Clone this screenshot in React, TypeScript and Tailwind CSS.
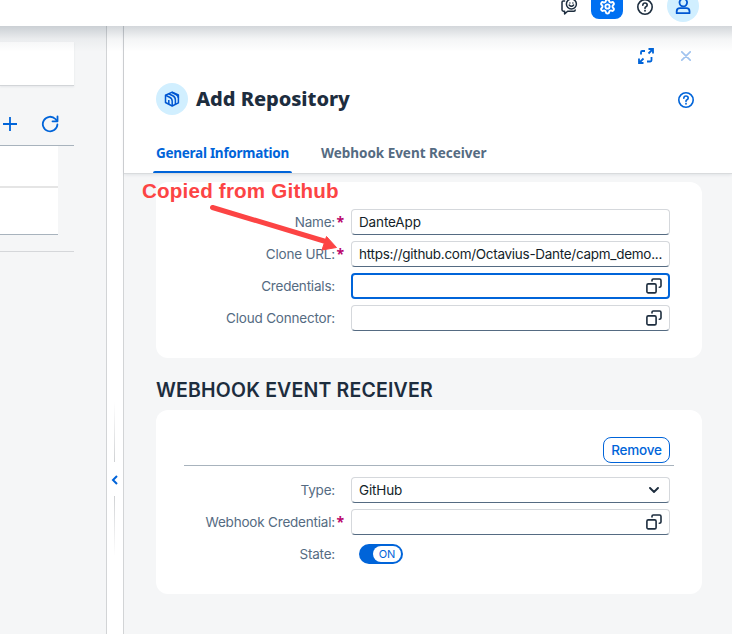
import React from "react";
import { Settings } from "lucide-react";

function ValueHelp() {
  return (
    <svg className="mr-[7px] h-4 w-4 shrink-0" viewBox="0 0 16 16" fill="none" stroke="#1d2d3e" strokeWidth="1.6" strokeLinecap="round">
      <rect x="0.9" y="5.9" width="9.2" height="9" rx="1.4" />
      <path d="M6 3V2.3Q6 1 7.3 1H13.6Q15 1 15 2.4V8Q15 9.2 13.3 9.2" />
    </svg>
  );
}

function HelpIcon({ className }: { className: string }) {
  return (
    <svg className={className} viewBox="0 0 16 16" fill="none" stroke="currentColor" strokeWidth="1.6" strokeLinecap="round">
      <circle cx="8" cy="8" r="7.2" />
      <path d="M5.8 6.2Q5.9 4 8 4T10.2 6Q10.2 7.2 9 7.8T8 9.4" />
      <path d="M8 11.7v.1" strokeWidth="1.8" />
    </svg>
  );
}

function Label({ text, required }: { text: string; required?: boolean }) {
  return (
    <div className="relative w-[179px] shrink-0 text-right text-[13.5px] leading-[26px] tracking-[-0.2px] text-[#556b82]">
      {text}
      {required && <span className="absolute top-0 left-[180.5px] font-['Noto_Sans',sans-serif] text-[14px] font-bold text-[#ba066c]">*</span>}
    </div>
  );
}

function Field({ value, icon, focused, spacing }: { value?: string; icon?: React.ReactNode; focused?: boolean; spacing?: string }) {
  return (
    <div
      className={
        focused
          ? "ml-4 flex h-[26px] w-[319px] items-center justify-between rounded-[4px] border-2 border-[#0064d9] bg-white pl-1.5"
          : "ml-4 flex h-[26px] w-[319px] items-center justify-between rounded-[4px] border border-[#d5d8dc] border-b-[#556b82] bg-white pl-[7px]"
      }
    >
      <span className={"whitespace-nowrap text-[13.5px] leading-[24px] text-[#131e29] " + (spacing ?? "tracking-[-0.13px]")}>{value}</span>
      <span className={focused ? "-mr-px flex" : "flex"}>{icon}</span>
    </div>
  );
}

function TopBar() {
  return (
    <header className="relative z-10 h-[26px] shrink-0 overflow-visible bg-white">
      <div className="flex h-[26px] items-start justify-end overflow-hidden pr-[33px]">
        <svg className="mt-[-2px] h-[18px] w-[17px] text-[#1d2d3e]" viewBox="0 0 17 18" fill="none" stroke="currentColor" strokeWidth="1.5" strokeLinecap="round" strokeLinejoin="round">
          <path d="M3.6 3H2.2Q1 3 1 4.2V11.8Q1 13.2 2.4 13.2H3.6V16L6.6 13.2H13Q14.2 13.2 14.2 12" />
          <circle cx="10.4" cy="6" r="5" />
          <path d="M8.2 7Q10.4 9.6 12.6 7" />
          <path d="M8.9 5v.1M11.9 5v.1" />
        </svg>
        <div className="ml-[13px] mt-[-13px] flex h-8 w-8 items-center justify-center rounded-lg bg-[#0070f2] pt-[6px] text-white">
          <Settings size={17} strokeWidth={2.7} />
        </div>
        <HelpIcon className="ml-[14px] mt-[-1px] h-4 w-4 text-[#1d2d3e]" />
        <div className="ml-[14px] mt-[-10px] h-8 w-8 rounded-full bg-[#d1efff]">
          <svg className="mt-2 ml-2 h-4 w-4" viewBox="0 0 16 16" fill="none" stroke="#0057d2" strokeWidth="1.8" strokeLinejoin="round">
            <circle cx="8.3" cy="4.6" r="3.8" />
            <path d="M1.7 15.2V13.2Q1.7 10.2 5 10.2H11.4Q14.5 10.2 14.5 13.2V15.2Z" />
          </svg>
        </div>
      </div>
      <div className="pointer-events-none absolute inset-x-0 top-[26px] h-[26px] bg-linear-to-b from-[#223548]/20 via-[#223548]/5 to-transparent" />
    </header>
  );
}

function ListPane() {
  return (
    <aside className="flex w-[107px] shrink-0 flex-col border-r border-[#d2d4d6] bg-[#f5f6f7]">
      <div className="mt-4 h-11 w-[74px] border-b border-[#d2d5d8] bg-white shadow-[0_1px_2px_#22354814]" />
      <div className="flex h-[60px] w-[74px] items-center border-b border-[#a8b3bd] pt-[17px]">
        <svg className="ml-[3px] h-[14px] w-[14px]" viewBox="0 0 14 14" stroke="#0064d9" strokeWidth="1.8"><path d="M7 0v14M0 7h14" /></svg>
        <svg className="ml-[24px] h-[18px] w-[18px]" viewBox="0 0 18 18" fill="none" stroke="#0064d9" strokeWidth="1.8" strokeLinecap="round" strokeLinejoin="round">
          <path d="M16.4 9.5A7.3 7.3 0 1 1 14.4 4L16 5.9" />
          <path d="M16.5 1.5V6.3H11.5" />
        </svg>
      </div>
      <div className="flex h-[89px] w-[58px] flex-col border-b border-[#a8b3bd] bg-white">
        <div className="h-[42px] border-b-2 border-[#e5e5e5]" />
      </div>
      <div className="mt-4 h-px w-[74px] bg-[#d5d7da]" />
    </aside>
  );
}

function Splitter() {
  return (
    <div className="flex w-[17px] shrink-0 flex-col items-center border-r border-[#d2d4d6] bg-white pt-[376px]">
      <div className="mr-px h-[60px] w-px bg-linear-to-b from-transparent to-[#d0d2d4]" />
      <svg className="mt-[13px] mr-px mb-[11px] h-[10px] w-[7px]" viewBox="0 0 7 10" fill="none" stroke="#0064d9" strokeWidth="2"><path d="M6 1L2 5L6 9" /></svg>
      <div className="mr-px h-[60px] w-px bg-linear-to-t from-transparent to-[#d0d2d4]" />
    </div>
  );
}

function DetailHeader() {
  return (
    <div className="flex h-[148px] shrink-0 flex-col border-b border-[#d9dbdd] bg-white pl-8 shadow-[0_1px_3px_#22354818]">
      <div className="flex h-[57px] items-start justify-end pr-[41px]">
        <svg className="mt-[22px] h-4 w-4" viewBox="0 0 16 16" fill="none" stroke="#0064d9" strokeWidth="1.8">
          <path d="M10.5 1H15V5.500M10.5 5.5L15 1" />
          <path d="M1 10.5V15H5.500M1 15L5.5 10.5" />
          <path d="M7 3H4.2Q3 3 3 4.2V6.500M9 13.500H12.3Q13.5 13.5 13.5 12.3V9" />
        </svg>
        <svg className="mt-[25px] ml-[27px] h-[10px] w-[10px]" viewBox="0 0 10 10" stroke="#a0c3ef" strokeWidth="1.7" strokeLinecap="round"><path d="M.8.8l8.4 8.4M9.2.8L.8 9.2" /></svg>
      </div>
      <div className="flex h-8 items-center">
        <div className="flex h-8 w-8 items-center justify-center rounded-full bg-[#d1efff]">
          <svg className="h-4 w-4" viewBox="0 0 16 16" fill="none" stroke="#0057d2" strokeWidth="1.5" strokeLinejoin="round">
            <path d="M1.5 4.3L8.2 1.1L14.4 4V11.8L8.2 15L1.5 11.5Z" />
            <path d="M1.5 4.3L5.6 6.2Q8.2 7.4 8.2 10.3V15" />
            <path d="M4.6 2.8L8.8 4.8Q11.4 6 11.4 9V13.2M8 1.500L12 3.500Q14.200 4.500 14.400 7M4.800 9V13" />
          </svg>
        </div>
        <h1 className="ml-2 flex-1 whitespace-nowrap font-['Noto_Sans','Open_Sans',sans-serif] text-[20px] font-extrabold leading-8 tracking-[-0.05px] text-[#1d2d3e]">Add Repository</h1>
        <HelpIcon className="mt-[2px] mr-[38px] h-4 w-4 text-[#0064d9]" />
      </div>
      <nav className="mt-[22px] flex font-['Noto_Sans','Open_Sans',sans-serif] text-[13.5px] font-bold">
        <div className="relative h-9 w-[133px] whitespace-nowrap leading-[33px] tracking-[-0.27px] text-[#0064d9]">
          General Information
          <div className="absolute -right-[3px] bottom-0 -left-[3px] h-[2px] rounded-t bg-[#0064d9]" />
        </div>
        <div className="ml-8 whitespace-nowrap leading-[33px] tracking-[-0.03px] text-[#556b82]">Webhook Event Receiver</div>
      </nav>
    </div>
  );
}

export default function App() {
  return (
    <div className="relative flex h-[634px] w-[732px] flex-col overflow-hidden bg-[#f5f6f7] font-['Inter','Noto_Sans',sans-serif]">
      <TopBar />
      <div className="flex min-h-0 flex-1">
        <ListPane />
        <Splitter />
        <main className="flex min-w-0 flex-1 flex-col">
          <DetailHeader />
          <section className="mt-2 ml-8 flex h-[176px] w-[546px] shrink-0 flex-col gap-1.5 rounded-xl bg-white pt-[27px]">
            <div className="flex"><Label text="Name:" required /><Field value="DanteApp" /></div>
            <div className="flex"><Label text="Clone URL:" required /><Field value="https://github.com/Octavius-Dante/capm_demo..." spacing="tracking-[-0.28px]" /></div>
            <div className="flex"><Label text="Credentials:" /><Field focused icon={<ValueHelp />} /></div>
            <div className="flex"><Label text="Cloud Connector:" /><Field icon={<ValueHelp />} /></div>
          </section>
          <h2 className="mt-[16px] ml-8 h-9 whitespace-nowrap text-[19.5px] font-semibold leading-[32px] tracking-[0.18px] text-[#1d2d3e]">WEBHOOK EVENT RECEIVER</h2>
          <section className="ml-8 flex h-[184px] w-[546px] shrink-0 flex-col rounded-xl bg-white pt-[27px]">
            <div className="mr-7 ml-7 flex h-[29px] justify-end border-b border-[#a8b3bd] pr-1">
              <button className="h-[26px] w-[67px] rounded-lg border border-[#0064d9] text-[13.5px] font-medium leading-6 tracking-[-0.2px] text-[#0064d9]">Remove</button>
            </div>
            <div className="mt-[11px] flex flex-col gap-1.5">
              <div className="flex">
                <Label text="Type:" />
                <Field value="GitHub" icon={<svg className="mr-[10px] h-[6px] w-[10px]" viewBox="0 0 10 6" fill="none" stroke="#1d2d3e" strokeWidth="1.9" strokeLinecap="round"><path d="M1 1L5 5L9 1" /></svg>} />
              </div>
              <div className="flex"><Label text="Webhook Credential:" required /><Field icon={<ValueHelp />} /></div>
              <div className="flex">
                <Label text="State:" />
                <div className="mt-[3px] ml-6 flex h-5 w-11 justify-end rounded-full bg-[#0064d9] p-[2px]">
                  <div className="h-4 w-7 rounded-full bg-white text-center text-[11px] leading-4 text-[#0064d9]">ON</div>
                </div>
              </div>
            </div>
          </section>
        </main>
      </div>
      <div className="absolute top-[179px] left-[142px] z-20 whitespace-nowrap font-['Liberation_Sans',Arial,sans-serif] text-[20.6px] font-bold leading-6 tracking-[0.19px] text-[#fc4444]">Copied from Github</div>
      <svg className="absolute top-[200px] left-[205px] z-20 h-[55px] w-[135px]" viewBox="0 0 135 55">
        <path d="M7.500 7.500L119 41" stroke="#fc4444" strokeWidth="5" strokeLinecap="round" />
        <path d="M121.500 36.500L131.500 47.500L117 50Z" fill="#fc4444" stroke="#fc4444" />
      </svg>
    </div>
  );
}
